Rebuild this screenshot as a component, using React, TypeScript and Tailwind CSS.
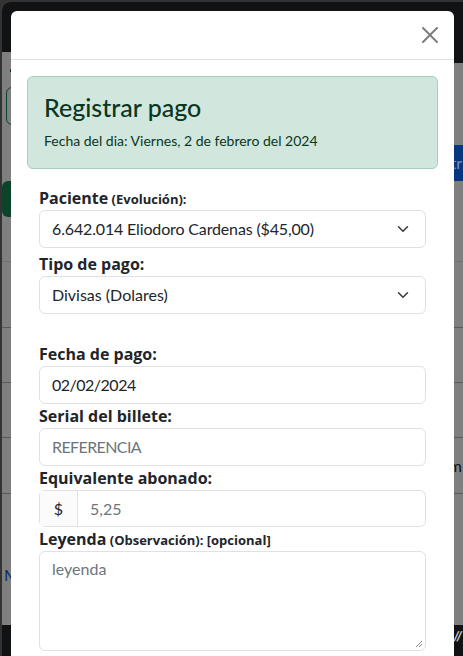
import React from "react";

const font = { fontFamily: 'Lato, "Open Sans", sans-serif' };
const labelFont = { fontFamily: '"Open Sans", "Noto Sans", sans-serif' };

function Chevron() {
  return (
    <svg width="16" height="12" viewBox="0 0 16 16" className="shrink-0">
      <path d="m2 5 6 6 6-6" fill="none" stroke="#343a40" strokeWidth="2" strokeLinecap="round" strokeLinejoin="round" />
    </svg>
  );
}

function Label({ main, extra }: { main: string; extra?: string }) {
  return (
    <div className="h-6 leading-6 text-[16px] font-bold text-[#212529]" style={labelFont}>
      {main}
      {extra ? <span className="text-[13px]"> {extra}</span> : null}
    </div>
  );
}

export default function App() {
  return (
    <div className="relative h-[656px] w-[463px] overflow-hidden bg-[#333333] pl-[2px] pt-[2px]" style={font}>
      {/* background page under overlay */}
      <div className="flex h-full flex-col overflow-hidden rounded-tl-[8px] bg-[#7f7f7f]">
        <div className="h-[50px] shrink-0 bg-[#111214]" />
        <div className="flex h-[11px] shrink-0 justify-end">
          <div className="w-[40px] bg-[#111214]" />
        </div>
        <div className="h-[24px] shrink-0 pl-[8px] pt-[6px]">
          <div className="h-[3px] w-[2px] bg-[#1a2a4a]" />
        </div>
        <div className="flex h-[38px] shrink-0">
          <div className="ml-[4px] w-[200px] rounded-l-[6px] border border-[#0c442a]" />
        </div>
        <div className="flex h-[20px] shrink-0" />
        <div className="flex h-[36px] shrink-0 justify-end">
          <div className="flex w-[120px] items-center justify-end bg-[#07377f] pr-[1px] text-[16px] text-[#7f93b8]">tr</div>
        </div>
        <div className="flex h-[36px] shrink-0">
          <div className="w-[120px] rounded-l-[6px] bg-[#0c442a]" />
        </div>
        <div className="h-[45px] shrink-0 border-b border-[#717171]" />
        <div className="h-[66px] shrink-0 border-b border-[#5a5a5a]" />
        <div className="h-[55px] shrink-0 border-b border-[#5a5a5a]" />
        <div className="h-[55px] shrink-0 border-b border-[#5a5a5a]" />
        <div className="flex h-[56px] shrink-0 items-center justify-end border-b border-[#5a5a5a] pr-[1px] text-[16px] text-[#101010]">
          <span>m</span>
        </div>
        <div className="flex h-[131px] shrink-0 items-center pl-[2px] pt-[30px] text-[16px] text-[#0a2f66]">M</div>
        <div className="flex flex-1 items-start justify-end bg-[#111214] pr-[1px] pt-[2px] text-[13px] font-bold italic text-[#cfd3d8]">
          <span>//</span>
        </div>
      </div>

      {/* modal */}
      <div className="absolute left-[11px] top-[11px] h-[660px] w-[443px] rounded-t-[6px] bg-white">
        <div className="flex h-[49px] items-center justify-end border-b border-[#dee2e6] pr-[16px]">
          <svg width="16" height="16" viewBox="0 0 16 16" className="opacity-50">
            <path d="M.293.293a1 1 0 0 1 1.414 0L8 6.586 14.293.293a1 1 0 1 1 1.414 1.414L9.414 8l6.293 6.293a1 1 0 0 1-1.414 1.414L8 9.414l-6.293 6.293a1 1 0 0 1-1.414-1.414L6.586 8 .293 1.707a1 1 0 0 1 0-1.414z" fill="#000" />
          </svg>
        </div>
        <div className="p-4">
          <div className="mb-[17px] h-[93px] rounded-[6px] border border-[#a3cfbb] bg-[#d1e7dd] p-4 text-[#0a3622]">
            <div className="mb-2 h-[29px] text-[25px] leading-[29px] font-medium">Registrar pago</div>
            <div className="h-[21px] text-[14px] leading-[21px]">Fecha del dia: Viernes, 2 de febrero del 2024</div>
          </div>
          <div className="px-3 text-[16px] text-[#212529]">
            <Label main="Paciente" extra="(Evolución):" />
            <div className="mb-1 flex h-[38px] items-center justify-between rounded-[6px] border border-[#dee2e6] pl-3 pr-[14px]">
              <span className="tracking-[-0.15px]">6.642.014 Eliodoro Cardenas ($45,00)</span>
              <Chevron />
            </div>
            <Label main="Tipo de pago:" />
            <div className="flex h-[38px] items-center justify-between rounded-[6px] border border-[#dee2e6] pl-3 pr-[14px]">
              <span>Divisas (Dolares)</span>
              <Chevron />
            </div>
            <div className="h-[28px]" />
            <Label main="Fecha de pago:" />
            <div className="flex h-[38px] items-center rounded-[6px] border border-[#dee2e6] px-3">
              <span className="tracking-[-0.5px]">02/02/2024</span>
            </div>
            <Label main="Serial del billete:" />
            <div className="flex h-[38px] items-center rounded-[6px] border border-[#dee2e6] px-3">
              <span className="tracking-[-0.6px] text-[#6c757d]">REFERENCIA</span>
            </div>
            <Label main="Equivalente abonado:" />
            <div className="flex h-[37px] items-stretch rounded-[6px] border border-[#dee2e6]">
              <div className="flex w-[38px] items-center justify-center border-r border-[#dee2e6] bg-[#fbfbfc]">$</div>
              <div className="flex items-center px-3 text-[#6c757d]">5,25</div>
            </div>
            <Label main="Leyenda" extra="(Observación): [opcional]" />
            <div className="relative h-[100px] rounded-[6px] border border-[#dee2e6] px-3 pt-[5px]">
              <span className="text-[#6c757d]">leyenda</span>
              <svg width="8" height="8" viewBox="0 0 8 8" className="absolute bottom-[2px] right-[2px]">
                <path d="M7 1 1 7M7 4 4 7" stroke="#888" strokeWidth="1" />
              </svg>
            </div>
          </div>
        </div>
      </div>
    </div>
  );
}
